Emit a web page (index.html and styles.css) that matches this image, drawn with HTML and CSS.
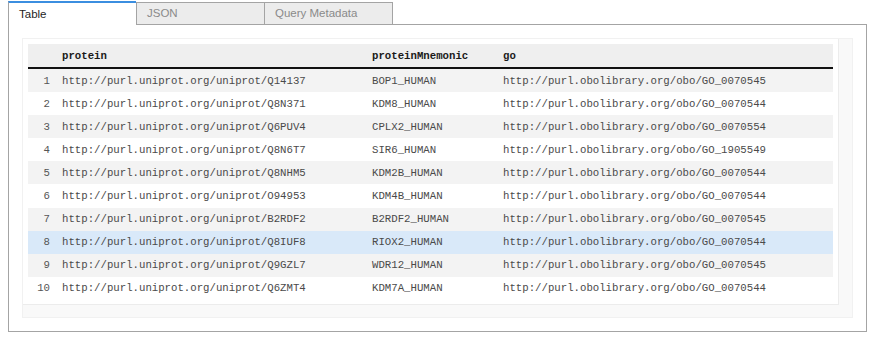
FILE: index.html
```html
<!DOCTYPE html>
<html lang="en">
<head>
  <meta charset="UTF-8">
  <title>Query Results</title>
  <link rel="stylesheet" href="styles.css">
</head>
<body>
  <div class="results">
    <div class="tabs">
      <div class="tab active">Table</div>
      <div class="tab">JSON</div>
      <div class="tab last">Query Metadata</div>
      <div class="tab-fill"></div>
    </div>

    <div class="panel">
      <div class="scroll">
        <div class="scroll-inner">
          <table class="grid">
            <colgroup>
              <col class="c-num">
              <col class="c-protein">
              <col class="c-mnemonic">
              <col class="c-go">
            </colgroup>
            <thead>
              <tr>
                <th></th>
                <th>protein</th>
                <th>proteinMnemonic</th>
                <th>go</th>
              </tr>
            </thead>
            <tbody>
              <tr><td class="num">1</td><td>http://purl.uniprot.org/uniprot/Q14137</td><td>BOP1_HUMAN</td><td>http://purl.obolibrary.org/obo/GO_0070545</td></tr>
              <tr><td class="num">2</td><td>http://purl.uniprot.org/uniprot/Q8N371</td><td>KDM8_HUMAN</td><td>http://purl.obolibrary.org/obo/GO_0070544</td></tr>
              <tr><td class="num">3</td><td>http://purl.uniprot.org/uniprot/Q6PUV4</td><td>CPLX2_HUMAN</td><td>http://purl.obolibrary.org/obo/GO_0070554</td></tr>
              <tr><td class="num">4</td><td>http://purl.uniprot.org/uniprot/Q8N6T7</td><td>SIR6_HUMAN</td><td>http://purl.obolibrary.org/obo/GO_1905549</td></tr>
              <tr><td class="num">5</td><td>http://purl.uniprot.org/uniprot/Q8NHM5</td><td>KDM2B_HUMAN</td><td>http://purl.obolibrary.org/obo/GO_0070544</td></tr>
              <tr><td class="num">6</td><td>http://purl.uniprot.org/uniprot/O94953</td><td>KDM4B_HUMAN</td><td>http://purl.obolibrary.org/obo/GO_0070544</td></tr>
              <tr><td class="num">7</td><td>http://purl.uniprot.org/uniprot/B2RDF2</td><td>B2RDF2_HUMAN</td><td>http://purl.obolibrary.org/obo/GO_0070545</td></tr>
              <tr class="selected"><td class="num">8</td><td>http://purl.uniprot.org/uniprot/Q8IUF8</td><td>RIOX2_HUMAN</td><td>http://purl.obolibrary.org/obo/GO_0070544</td></tr>
              <tr><td class="num">9</td><td>http://purl.uniprot.org/uniprot/Q9GZL7</td><td>WDR12_HUMAN</td><td>http://purl.obolibrary.org/obo/GO_0070545</td></tr>
              <tr><td class="num">10</td><td>http://purl.uniprot.org/uniprot/Q6ZMT4</td><td>KDM7A_HUMAN</td><td>http://purl.obolibrary.org/obo/GO_0070544</td></tr>
            </tbody>
          </table>
        </div>
      </div>
    </div>
  </div>
</body>
</html>
```

FILE: styles.css
```css
:root {
  --tab-border: #a4a4a4;
  --tab-bg: #ececec;
  --active: #3b8ee0;
  --row-alt: #f3f3f3;
  --row-selected: #d9e9f9;
  --text-mono: #4a4a4a;
}

body {
  margin: 0;
  padding: 0 11px 0 8px;
  background-color: #FFFFFF;
  font-family: 'Liberation Sans', Arial, sans-serif;
}

.results {
  width: 859px;
}

/* tab strip */
.tabs {
  display: flex;
  align-items: flex-end;
  height: 25px;
}

.tab {
  box-sizing: border-box;
  width: 128px;
  height: 23px;
  padding-left: 10px;
  line-height: 21px;
  font-size: 11.5px;
  color: #8a8a8a;
  background-color: var(--tab-bg);
  border-top: 1px solid var(--tab-border);
  border-left: 1px solid var(--tab-border);
  border-bottom: 1px solid var(--tab-border);
}

.tab.active {
  height: 24px;
  padding-left: 10px;
  line-height: 22px;
  color: #1e1e1e;
  background-color: #FFFFFF;
  border-top: 2px solid var(--active);
  border-bottom: none;
}

.tab.last {
  width: 129px;
  border-right: 1px solid var(--tab-border);
}

.tab-fill {
  flex: 1;
  border-bottom: 1px solid var(--tab-border);
}

/* panel */
.panel {
  border: 1px solid var(--tab-border);
  border-top: none;
  padding: 13px;
}

.scroll {
  background-color: #f9f9f9;
  border: 1px solid #f1f1f1;
  padding: 0 13px 12px 0;
}

.scroll-inner {
  background-color: #FFFFFF;
  border-right: 1px solid #ececec;
  border-bottom: 1px solid #ececec;
  padding: 5px 4px 4px 5px;
}

/* results table */
.grid {
  width: 805px;
  table-layout: fixed;
  border-collapse: collapse;
  font-family: 'Liberation Mono', 'Courier New', monospace;
  font-size: 10.7px;
  color: var(--text-mono);
}

.c-num { width: 28px; }
.c-protein { width: 310px; }
.c-mnemonic { width: 131px; }
.c-go { width: 336px; }

.grid th {
  height: 23px;
  padding: 0 6px;
  text-align: left;
  font-weight: bold;
  color: #1a1a1a;
  background-color: #efefef;
  border-bottom: 2px solid #111;
}

.grid td {
  height: 23.1px;
  padding: 0 6px;
  white-space: nowrap;
  vertical-align: middle;
}

.grid td.num {
  text-align: right;
  color: #555;
}

.grid tbody tr:nth-child(odd) {
  background-color: var(--row-alt);
}

.grid tbody tr.selected {
  background-color: var(--row-selected);
}
```
